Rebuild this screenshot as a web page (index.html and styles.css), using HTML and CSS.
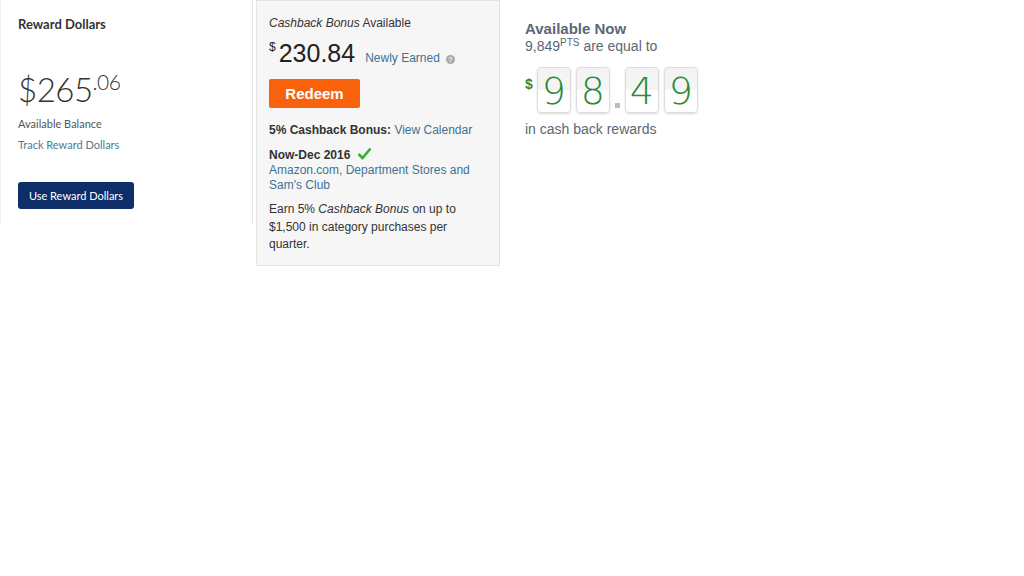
FILE: index.html
```html
<!DOCTYPE html>
<html>
<head>
    <meta name="viewport" content="width=device-width, initial-scale=1.0">
    <link rel="stylesheet" href="styles.css">
</head>
<body>
    <div class="page">
        <div class="reward-card">
            <h3 class="reward-title">Reward Dollars</h3>
            <div class="reward-amount">$265<sup>.06</sup></div>
            <div class="reward-label">Available Balance</div>
            <a class="reward-link" href="#">Track Reward Dollars</a>
            <button class="reward-btn">Use Reward Dollars</button>
        </div>

        <div class="cashback-card">
            <div class="cb-head"><i>Cashback Bonus</i> Available</div>
            <div class="cb-amount-row">
                <span class="cb-amount"><sup>$</sup>230.84</span>
                <a class="cb-link" href="#">Newly Earned</a>
                <span class="info-dot">?</span>
            </div>
            <button class="redeem-btn">Redeem</button>
            <div class="cb-bonus"><b>5% Cashback Bonus:</b> <a href="#">View Calendar</a></div>
            <div class="cb-period">
                <b>Now-Dec 2016</b>
                <svg width="15" height="13" viewBox="0 0 15 13"><path d="M1.5 7 L5.5 11 L13.5 1.5" fill="none" stroke="#2fb52f" stroke-width="2.6"/></svg>
            </div>
            <a class="cb-stores" href="#">Amazon.com, Department Stores and Sam's Club</a>
            <p class="cb-text">Earn 5% <i>Cashback Bonus</i> on up to $1,500 in category purchases per quarter.</p>
        </div>

        <div class="points">
            <div class="pts-title">Available Now</div>
            <div class="pts-sub">9,849<sup>PTS</sup> are equal to</div>
            <div class="tiles">
                <span class="tile-dollar">$</span>
                <span class="tile">9</span>
                <span class="tile">8</span>
                <span class="tile-dot"></span>
                <span class="tile">4</span>
                <span class="tile">9</span>
            </div>
            <div class="pts-foot">in cash back rewards</div>
        </div>
    </div>
</body>
</html>
```

FILE: styles.css
```css
* {margin: 0; padding: 0; box-sizing: border-box;}
body {
    background: #fff;
    font-family: "Liberation Sans", Arial, sans-serif;
    color: #333;
}

.page {
    display: flex;
    align-items: flex-start;
}

/* left card */
.reward-card {
    width: 253px;
    height: 223px;
    border-left: 1px solid #eee;
    border-right: 1px solid #e6e6e6;
    padding: 16px 17px 0;
    font-family: Lato, "Open Sans", sans-serif;
    display: flex;
    flex-direction: column;
    align-items: flex-start;
}

.reward-title {
    font-size: 13px;
    font-weight: bold;
    color: #333;
    line-height: 16px;
}

.reward-amount {
    margin-top: 39px;
    font-size: 33px;
    font-weight: 300;
    color: #333;
    line-height: 36px;
    letter-spacing: -0.5px;
}

.reward-amount sup {
    font-size: 21px;
    vertical-align: 12px;
    line-height: 0;
}

.reward-label {
    margin-top: 10px;
    font-size: 11px;
    color: #555;
    line-height: 14px;
}

.reward-link {
    margin-top: 7px;
    font-size: 11px;
    color: #4a7a96;
    text-decoration: none;
    line-height: 14px;
}

.reward-btn {
    margin-top: 30px;
    width: 116px;
    height: 27px;
    background: #0e2e6a;
    color: #fff;
    border: none;
    border-radius: 3px;
    font-family: Lato, "Open Sans", sans-serif;
    font-size: 11px;
}

/* middle card */
.cashback-card {
    width: 244px;
    height: 266px;
    margin-left: 3px;
    background: #f6f6f6;
    border: 1px solid #e3e3e3;
    padding: 14px 12px 0;
    font-size: 12px;
    color: #333;
}

.cb-head {
    font-size: 12px;
    line-height: 16px;
}

.cb-amount-row {
    display: flex;
    align-items: baseline;
    margin-top: 1px;
    height: 30px;
}

.cb-amount {
    font-size: 25px;
    color: #222;
    line-height: 30px;
}

.cb-amount sup {
    font-size: 12px;
    vertical-align: 11px;
    margin-right: 3px;
}

.cb-link {
    margin-left: 10px;
    font-size: 12px;
    color: #3e7294;
    text-decoration: none;
}

.info-dot {
    display: inline-block;
    width: 9px;
    height: 9px;
    margin-left: 6px;
    border-radius: 50%;
    background: #aaa;
    color: #eee;
    font-size: 7px;
    line-height: 9px;
    font-weight: bold;
    text-align: center;
}

.redeem-btn {
    display: block;
    margin-top: 17px;
    width: 91px;
    height: 29px;
    background: #f8620d;
    color: #fff;
    border: none;
    border-radius: 2px;
    font-family: "Liberation Sans", Arial, sans-serif;
    font-size: 15px;
    font-weight: bold;
}

.cb-bonus {
    margin-top: 15px;
    line-height: 15px;
}

.cb-bonus a, .cb-stores {
    color: #3e7294;
    text-decoration: none;
}

.cb-period {
    margin-top: 10px;
    display: flex;
    align-items: center;
    gap: 7px;
    line-height: 15px;
}

.cb-period svg {
    position: relative;
    top: -2px;
}

.cb-stores {
    display: block;
    line-height: 15px;
}

.cb-text {
    margin-top: 8px;
    line-height: 17.5px;
}

/* right side */
.points {
    margin-left: 25px;
    padding-top: 20px;
}

.pts-title {
    font-size: 15px;
    font-weight: bold;
    color: #5b6776;
    line-height: 18px;
}

.pts-sub {
    font-size: 14px;
    line-height: 17px;
    color: #5b6776;
}

.pts-sub sup {
    font-size: 10px;
    vertical-align: 5px;
    line-height: 0;
}

.tiles {
    display: flex;
    align-items: flex-start;
    margin-top: 12px;
    gap: 5px;
}

.tile-dollar {
    color: #2e8b3a;
    font-size: 14px;
    font-weight: bold;
    margin-top: 9px;
    margin-right: -1px;
}

.tile {
    width: 34px;
    height: 46px;
    border: 1px solid #ddd;
    border-radius: 4px;
    background: linear-gradient(#f4f4f4 0%, #f4f4f4 50%, #fff 50%, #fff 100%);
    box-shadow: 0 1px 2px rgba(0,0,0,0.15);
    color: #2a8a36;
    font-family: "DejaVu Sans", sans-serif;
    font-weight: 200;
    font-size: 38px;
    line-height: 46px;
    text-align: center;
}

.tile-dot {
    width: 5px;
    height: 5px;
    background: #bbb;
    margin-top: 36px;
}

.pts-foot {
    margin-top: 8px;
    font-size: 14px;
    line-height: 17px;
    color: #5b6776;
}
```
